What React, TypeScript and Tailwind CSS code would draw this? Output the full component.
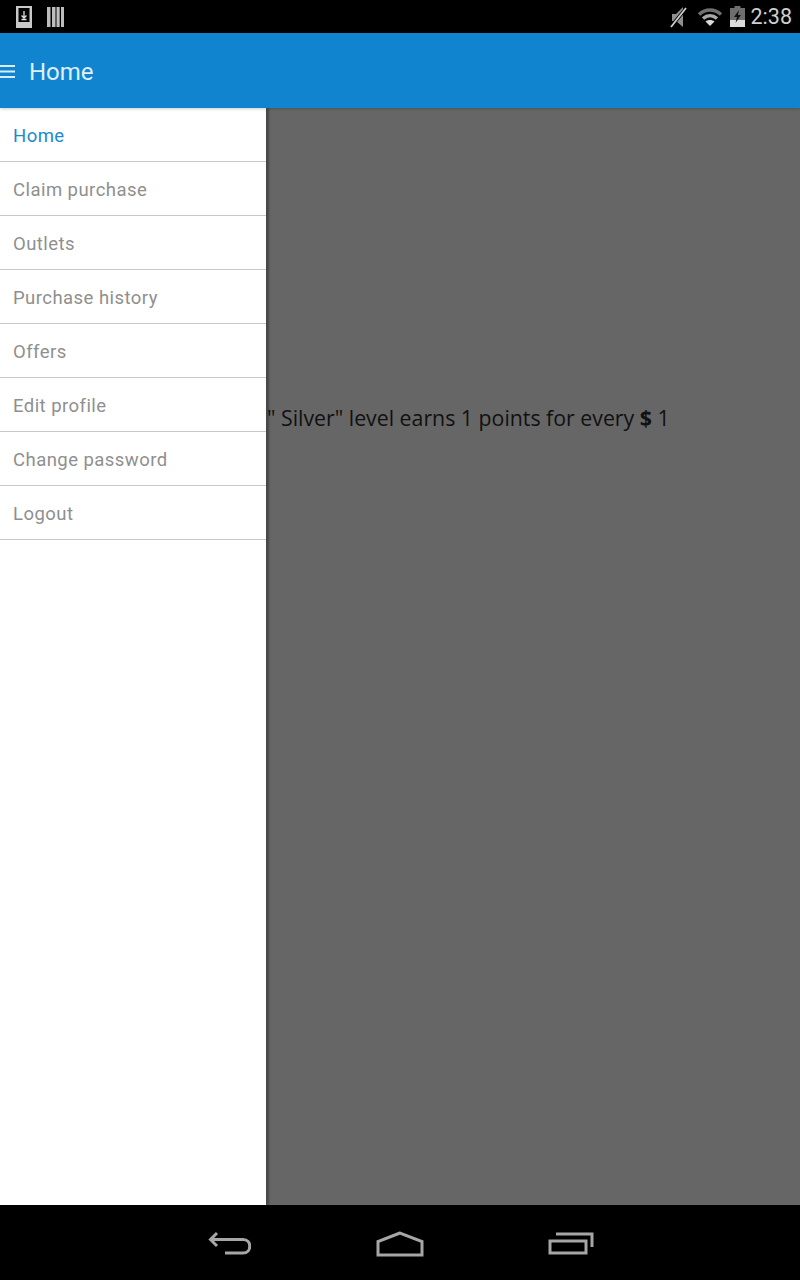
const menuItems = ['Home', 'Claim purchase', 'Outlets', 'Purchase history', 'Offers', 'Edit profile', 'Change password', 'Logout'];

function StatusBar() {
  return (
    <div className="flex h-[33px] items-center justify-between bg-black pl-[16px] pr-[8px]">
      <div className="flex items-center gap-[15px]">
        <svg width="16" height="22" viewBox="0 0 16 22">
          <path fill="#c8c8c8" fillRule="evenodd" d="M0 0h16v22H0zM2.500 2v14h11V2z" />
          <path fill="none" stroke="#dddddd" strokeWidth="1.300" d="M8 5v7M5.500 9.500 8 12l2.500-2.500M5.500 13.500h5" />
        </svg>
        <svg width="17" height="20" viewBox="0 0 17 20">
          <path fill="#bdbdbd" d="M0 0h3.500v20H0zM5 0h3.500v20H5zM9.500 0h3.200v20H9.500zM14 0h3v20h-3z" />
        </svg>
      </div>
      <div className="flex items-center">
        <svg width="20" height="24" viewBox="0 0 20 24">
          <path fill="#8f8f8f" d="M3 9h4l7-7v20l-7-6H3z" />
          <path stroke="#000" strokeWidth="3.500" d="M1 23 18 2" />
          <path stroke="#cfcfcf" strokeWidth="1.800" d="M2 22 17 3" />
        </svg>
        <svg className="ml-[8px]" width="26" height="20" viewBox="0 0 26 20">
          <path fill="none" stroke="#6f6f6f" strokeWidth="3.500" d="M2 7.500c6.500-6 15.500-6 22 0" />
          <path fill="none" stroke="#a8a8a8" strokeWidth="3.500" d="M6 11.500c4.300-3.800 9.700-3.800 14 0" />
          <path fill="#dadada" d="M13 19 8.500 14.500c2.600-2 6.400-2 9 0z" />
        </svg>
        <svg className="ml-[7px]" width="15" height="21" viewBox="0 0 15 21">
          <path fill="#6e6e6e" d="M4.500 0h6v2H15v12H0V2h4.500z" />
          <path fill="#dcdcdc" d="M0 14h15v7H0z" />
          <path fill="#111111" d="M9 4 4 11h3l-1.500 6L11 9H8z" />
        </svg>
        <span className="ml-[6px] font-['Roboto',sans-serif] text-[21.5px] leading-none text-[#cfcfcf]">2:38</span>
      </div>
    </div>
  );
}

function Header() {
  return (
    <header className="relative z-20 flex h-[75px] items-center bg-[#1184cf] pt-[2px] shadow-[0_1px_3px_rgba(0,0,0,0.2)]">
      <svg width="15" height="15" viewBox="0 0 15 15">
        <path stroke="#d8ecf9" strokeWidth="2" d="M0 2h15M0 7.500h15M0 13h15" />
      </svg>
      <h1 className="ml-[14px] font-['Roboto',sans-serif] text-[24px] font-normal leading-none text-[#dff0fb]">Home</h1>
    </header>
  );
}

function Drawer() {
  return (
    <nav className="z-10 w-[266px] shrink-0 bg-white shadow-[3px_0_2px_rgba(0,0,0,0.3)]">
      {menuItems.map((item, i) => (
        <div
          key={item}
          className={`flex h-[54px] items-center border-b border-[#c8c8c8] pl-[13px] pt-[4px] font-['Roboto',sans-serif] text-[18.5px] tracking-[0.45px] ${
            i === 0 ? 'text-[#1a8ccb]' : 'text-[#8f8f8f]'
          }`}
        >
          {item}
        </div>
      ))}
    </nav>
  );
}

function NavBar() {
  return (
    <div className="flex h-[75px] items-start justify-center bg-black pt-[26px]">
      <svg width="44" height="24" viewBox="0 0 44 24" fill="none" stroke="#a6a6a6" strokeWidth="3">
        <path d="M10 2 3.500 8.500 10 15M3.500 8.500H36c9 0 9 13.500 0 13.500H18" />
      </svg>
      <svg className="ml-[125px]" width="48" height="26" viewBox="0 0 48 26" fill="none" stroke="#a6a6a6" strokeWidth="3">
        <path d="M24 2 2 10.500v13.500h44V10.500z" />
      </svg>
      <svg className="ml-[124px]" width="46" height="24" viewBox="0 0 46 24" fill="none" stroke="#a6a6a6" strokeWidth="3">
        <path d="M2 10h36v12H2zM8 3h36v13" />
      </svg>
    </div>
  );
}

export default function App() {
  return (
    <div className="flex h-[1280px] w-[800px] flex-col overflow-hidden">
      <StatusBar />
      <Header />
      <div className="flex min-h-0 flex-1">
        <Drawer />
        <main className="min-w-0 flex-1 overflow-hidden bg-[#666666] pt-[296px] font-['Open_Sans',sans-serif] text-[21.3px] leading-[27px] text-[#111111]">
          <p className="whitespace-nowrap pl-[1px]">
            " Silver" level earns 1 points for every <b className="font-bold">$</b> 1
          </p>
        </main>
      </div>
      <NavBar />
    </div>
  );
}
